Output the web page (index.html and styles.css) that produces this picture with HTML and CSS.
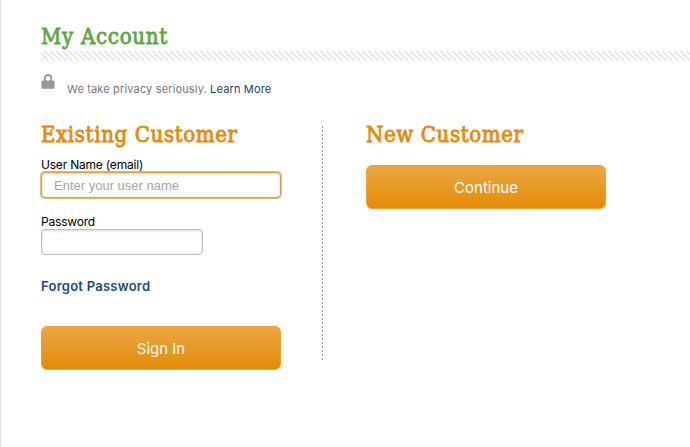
FILE: index.html
```html
<!DOCTYPE html>
<html lang="en">
<head>
    <meta charset="UTF-8">
    <meta name="viewport" content="width=device-width, initial-scale=1.0">
    <title>My Account</title>
    <link rel="stylesheet" href="styles.css">
</head>
<body>
    <div class="page">
        <!-- Header -->
        <h1>My Account</h1>
        <div class="stripes"></div>

        <div class="privacy">
            <svg class="lock" width="14" height="15" viewBox="0 0 14 15">
                <path d="M3.8 7V4.2a3.2 3.2 0 0 1 6.4 0V7" fill="none" stroke="#999" stroke-width="1.8"/>
                <rect x="0.5" y="6.4" width="13" height="8.3" rx="1" fill="#999"/>
            </svg>
            <p>We take privacy seriously. <a href="#" class="learn-more">Learn More</a></p>
        </div>

        <div class="columns">
            <!-- Existing Customer -->
            <form class="existing">
                <h2>Existing Customer</h2>
                <label for="username">User Name (email)</label>
                <input type="text" id="username" class="username" placeholder="Enter your user name">
                <label for="password">Password</label>
                <input type="password" id="password" class="password">
                <a href="#" class="forgot">Forgot Password</a>
                <button type="button" class="btn">Sign In</button>
            </form>

            <div class="divider"></div>

            <!-- New Customer -->
            <div class="new">
                <h2>New Customer</h2>
                <button type="button" class="btn">Continue</button>
            </div>
        </div>
    </div>
</body>
</html>
```
FILE: styles.css
```css
* {
    margin: 0;
    padding: 0;
    box-sizing: border-box;
}

body {
    background: #fff;
    font-family: 'Inter', 'Liberation Sans', sans-serif;
    color: #000;
}

.page {
    height: 447px;
    padding: 21px 0 0 40px;
    border-left: 1px solid #e4e4e4;
    overflow: hidden;
}

h1, h2 {
    height: 30px;
    font-family: 'DejaVu Serif Condensed', 'DejaVu Serif', serif;
    font-stretch: condensed;
    font-size: 22px;
    line-height: 32px;
    font-weight: normal;
    -webkit-text-stroke: 0.8px currentColor;
    letter-spacing: 0.63px;
    white-space: nowrap;
}

h1 {
    color: #61a744;
    letter-spacing: 0.75px;
}

h2 {
    color: #e48b0b;
}

.stripes {
    height: 10px;
    background: repeating-linear-gradient(45deg, #e2e2e2 0, #e2e2e2 1.9px, #fff 2.1px, #fff 4.243px);
}

/* Privacy note */
.privacy {
    display: flex;
    gap: 12px;
    height: 60px;
    padding-top: 13px;
    font-size: 11px;
    line-height: 16px;
    letter-spacing: 0.15px;
    color: #777;
}

.privacy p {
    padding-top: 7px;
}

a {
    color: #1c4a84;
    text-decoration: none;
}

.learn-more {
    color: #243f78;
}

/* Columns */
.columns {
    display: flex;
}

.existing,
.new {
    display: flex;
    flex-direction: column;
    align-items: flex-start;
    width: 240px;
    margin-top: -2px;
}

label {
    font-size: 12px;
    line-height: 15px;
    letter-spacing: -0.2px;
}

.existing label:first-of-type {
    margin-top: 8px;
}

input {
    height: 26px;
    padding: 0 12px;
    border: 1px solid #bbb;
    border-radius: 4px;
    box-shadow: inset 0 1px 3px rgba(0,0,0,0.15);
    font-family: 'Liberation Sans', Arial, sans-serif;
    font-size: 13px;
    outline: none;
}

input::placeholder {
    color: #a5a5a5;
}

.username {
    width: 240px;
    margin: 0 0 16px;
    border-color: #d3a14b;
    box-shadow: 0 0 0 1px #e9bd6b, inset 0 1px 3px rgba(0,0,0,0.18);
}

.password {
    width: 162px;
}

.forgot {
    margin-top: 23px;
    font-size: 13px;
    line-height: 17px;
    font-weight: 600;
    letter-spacing: 0.25px;
}

.btn {
    width: 240px;
    height: 44px;
    margin-top: 31px;
    border: 1px solid #eda333;
    border-radius: 6px;
    background: linear-gradient(#eca743, #e48b08);
    color: #fff;
    font-family: inherit;
    font-size: 15px;
    cursor: pointer;
}

.divider {
    width: 1px;
    height: 236px;
    margin: 5px 43px 0 41px;
    background: repeating-linear-gradient(#a0988b 0, #a0988b 2px, transparent 2px, transparent 4px);
}

.new .btn {
    margin-top: 16px;
}
```
